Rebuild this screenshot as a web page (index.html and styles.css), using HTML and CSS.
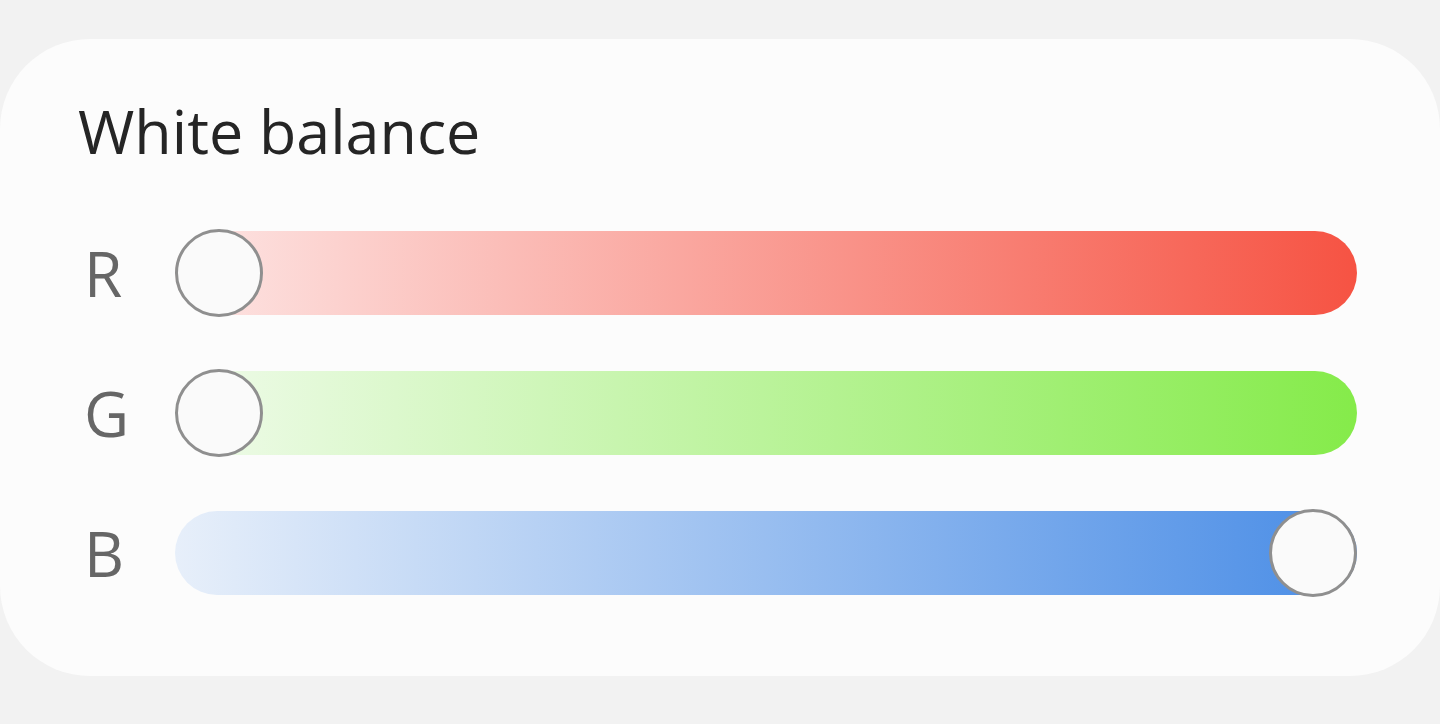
FILE: index.html
```html
<!DOCTYPE html>
<html lang="en">
<head>
    <meta charset="UTF-8">
    <meta name="viewport" content="width=device-width, initial-scale=1.0">
    <title>White balance</title>
    <link rel="stylesheet" href="styles.css">
</head>
<body>
    <!-- Tarjeta de balance de blancos -->
    <div class="card">
        <h1 class="title">White balance</h1>

        <div class="sliders">
            <div class="row">
                <span class="label">R</span>
                <div class="track red">
                    <div class="thumb" style="--v: 0"></div>
                </div>
            </div>
            <div class="row">
                <span class="label">G</span>
                <div class="track green">
                    <div class="thumb" style="--v: 0"></div>
                </div>
            </div>
            <div class="row">
                <span class="label">B</span>
                <div class="track blue">
                    <div class="thumb" style="--v: 1"></div>
                </div>
            </div>
        </div>
    </div>
</body>
</html>
```

FILE: styles.css
```css
body {
    margin: 0;
    padding: 0;
    background-color: #f2f2f2;
    font-family: 'Open Sans', 'Noto Sans', sans-serif;
}

.card {
    margin-top: 39px;
    height: 637px;
    box-sizing: border-box;
    padding: 0 83px 0 78px;
    background-color: #fcfcfc;
    border-radius: 90px;
}

.title {
    margin: 0;
    padding-top: 50px;
    font-size: 61px;
    font-weight: 400;
    line-height: 84px;
    color: #252525;
}

.sliders {
    display: flex;
    flex-direction: column;
    gap: 56px;
    margin-top: 58px;
}

.row {
    display: flex;
    align-items: center;
    height: 84px;
}

.label {
    width: 97px;
    padding-left: 6px;
    box-sizing: border-box;
    font-size: 62px;
    line-height: 84px;
    color: #666;
}

.track {
    flex: 1;
    height: 84px;
    position: relative;
    border-radius: 42px;
}

.red {
    background: linear-gradient(to right, #fde6e5, #f65343);
}

.green {
    background: linear-gradient(to right, #f0fbeb, #85eb4a);
}

.blue {
    background: linear-gradient(to right, #e7effa, #4a8de6);
}

/* Círculo del control */
.thumb {
    position: absolute;
    top: -2px;
    left: calc(var(--v) * (100% - 88px));
    width: 88px;
    height: 88px;
    box-sizing: border-box;
    border: 3px solid #8f8f8f;
    border-radius: 50%;
    background-color: #fafafa;
}
```
